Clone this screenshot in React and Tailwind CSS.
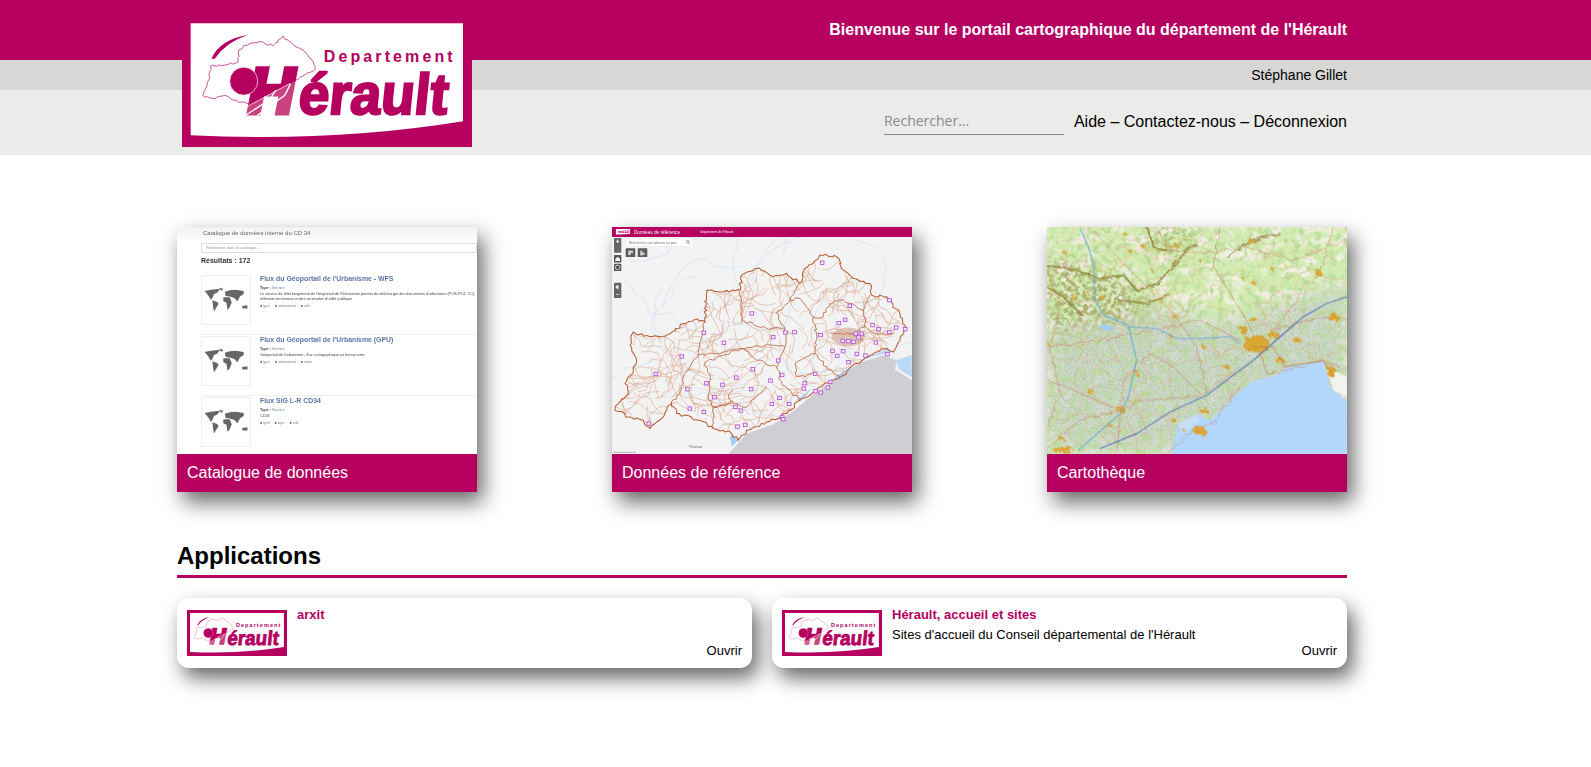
// App.jsx
import React from 'react';

const MAGENTA = '#b50060';

// small seeded generator so the drawn maps stay the same on every load
const makeRandom = (seed) => {
  let s = seed;
  return () => {
    s = (s * 16807) % 2147483647;
    return (s - 1) / 2147483646;
  };
};

const toPoints = (list) => list.map((p) => p.join(',')).join(' ');

const wander = (random, x, y, steps, step) => {
  const pts = [[x, y]];
  let angle = random() * Math.PI * 2;
  for (let i = 0; i < steps; i++) {
    angle += (random() - 0.5) * 1.6;
    x += Math.cos(angle) * step * (0.6 + random());
    y += Math.sin(angle) * step * (0.6 + random());
    pts.push([Math.round(x), Math.round(y)]);
  }
  return toPoints(pts);
};

// breaks each segment up so hand placed outlines look like real borders
const roughen = (points, seed, amp, closed) => {
  const random = makeRandom(seed);
  const list = points.trim().split(/\s+/).map((p) => p.split(',').map(Number));
  if (closed) list.push(list[0]);
  const out = [];
  list.forEach((p, i) => {
    if (i === 0) {
      out.push(p);
      return;
    }
    const q = list[i - 1];
    const n = Math.max(2, Math.round(Math.hypot(p[0] - q[0], p[1] - q[1]) / 9));
    for (let k = 1; k <= n; k++) {
      const t = k / n;
      const j = k === n ? 0 : amp;
      out.push([
        Math.round(q[0] + (p[0] - q[0]) * t + (random() - 0.5) * j),
        Math.round(q[1] + (p[1] - q[1]) * t + (random() - 0.5) * j),
      ]);
    }
  });
  return toPoints(out);
};

const LOGO_OUTLINE = roughen(
  '238,312 200,300 165,285 130,295 100,285 118,240 122,198 165,195 205,185 207,150 240,130 270,125 310,137 340,108 360,125 400,150 430,185 436,208 375,240',
  77,
  7,
);

const Logo = ({ className, idPrefix, ...rest }) => (
  <svg viewBox="37 45 869 395" preserveAspectRatio="none" className={className} {...rest}>
    <rect x="37" y="45" width="869" height="395" fill={MAGENTA} />
    <path d="M63 70H879V363Q500 425 63 405Z" fill="#fff" />
    <path d="M125 176Q150 118 235 105Q170 125 135 176Z" fill={MAGENTA} />
    <polyline points={LOGO_OUTLINE} fill="none" stroke={MAGENTA} strokeWidth="2" />
    <clipPath id={`${idPrefix}-top`}>
      <path d="M200 170H420V236L360 250L230 322H200Z" />
    </clipPath>
    <clipPath id={`${idPrefix}-low`}>
      <path d="M200 322H230L360 250L420 236V350H200Z" />
    </clipPath>
    <g style={{ fontFamily: '"Liberation Sans", Arial, sans-serif', fontWeight: 700 }}>
      <g clipPath={`url(#${idPrefix}-top)`}>
        <text
          transform="translate(225 338) skewX(-11)"
          fontSize="193"
          fill={MAGENTA}
          stroke={MAGENTA}
          strokeWidth="15"
        >
          H
        </text>
      </g>
      <g clipPath={`url(#${idPrefix}-low)`}>
        <text transform="translate(225 338) skewX(-11)" fontSize="193" fill="#c9417f" stroke="#c9417f" strokeWidth="15">
          H
        </text>
      </g>
      <text
        transform="translate(382 342) skewX(-6)"
        fontSize="172"
        fill={MAGENTA}
        stroke={MAGENTA}
        strokeWidth="7"
        textLength="448"
        lengthAdjust="spacingAndGlyphs"
      >
        érault
      </text>
      <text x="462" y="187" fontSize="48" fill={MAGENTA} textLength="386">
        Departement
      </text>
    </g>
    <path d="M228 345L300 298L318 270M262 346L345 285L362 252" stroke="#fff" strokeWidth="4" fill="none" />
    <path d="M230 320L360 250" stroke="#fff" strokeWidth="2" fill="none" />
    <circle cx="222" cy="243" r="42" fill={MAGENTA} stroke="#fff" strokeWidth="2" />
  </svg>
);

const WorldIcon = () => (
  <svg viewBox="20 50 147 82" className="w-[46px] h-[26px]" fill="#666">
    <path d="M25 62L45 58L75 55L65 68L55 72L50 85L45 90L38 78L30 68Z" />
    <path d="M72 52L85 55L78 62Z" />
    <path d="M50 92L65 97L70 103L60 120L55 128L52 110Z" />
    <path d="M90 65L105 60L125 58L150 62L150 72L138 80L130 95L120 85L105 80L92 78Z" />
    <path d="M85 82L105 82L112 98L105 115L98 122L95 100L85 95Z" />
    <path d="M145 110L162 108L162 118L146 118Z" />
  </svg>
);

const tag = (label) => (
  <span key={label} className="mr-[5px]">
    <span className="text-[#333]">●</span> <span className="text-[#6a7f9f]">{label}</span>
  </span>
);

const CatalogRow = ({ title, text, tags, last }) => (
  <div className={`flex h-[61px] pt-[1px] ${last ? '' : 'border-b border-[#f0f0f0]'}`}>
    <div className="w-[50px] h-[50px] shrink-0 border border-[#eee] rounded-[1px] flex items-center justify-center">
      <WorldIcon />
    </div>
    <div className="ml-[9px] w-[240px] whitespace-nowrap overflow-hidden">
      <div className="text-[6.9px] font-bold text-[#5d76a6] leading-[9px] -mt-[1px]">{title}</div>
      <div className="text-[3.8px] leading-[6px] mt-[2px] text-[#444]">
        <b>Type :</b> <span className="text-[#6a7f9f]">Service</span>
      </div>
      <div className="text-[3.8px] leading-[5px] mt-[1px] text-[#444] whitespace-normal">{text}</div>
      <div className="text-[3.8px] leading-[5px] mt-[2px]">{tags.map(tag)}</div>
    </div>
  </div>
);

const CatalogImage = () => (
  <div className="h-full bg-white blur-[0.35px] overflow-hidden">
    <div className="h-[12px] bg-gradient-to-b from-[#f2f2f2] to-[#fafafa] pl-[26px] text-[6px] leading-[12px] text-[#666] whitespace-nowrap">
      Catalogue de données interne du CD 34
    </div>
    <div className="pl-[24px]">
      <div className="mt-[4px] h-[10px] border border-[#ddd] rounded-[1px] pl-[4px] text-[3.8px] leading-[8px] text-[#999]">
        Rechercher dans le catalogue...
      </div>
      <div className="text-[7px] font-bold text-[#333] leading-[9px] mt-[3px] mb-[9px]">Résultats : 172</div>
      <CatalogRow
        title="Flux du Géoportail de l'Urbanisme - WFS"
        text="Le service de téléchargement du Géoportail de l'Urbanisme permet de télécharger des documents d'urbanisme (POS,PLU, CC), référents territoriaux et des servitudes d'utilité publique"
        tags={['gpu', 'urbanisme', 'wfs']}
      />
      <CatalogRow
        title="Flux du Géoportail de l'Urbanisme (GPU)"
        text="Géoportail de l'urbanisme - flux cartographique au format wms"
        tags={['gpu', 'urbanisme', 'wms']}
      />
      <CatalogRow title="Flux SIG L-R CD34" text="CD34" tags={['gml', 'wpc', 'wfs']} last />
    </div>
  </div>
);

const DEPT = roughen(
  '45,570 60,545 85,520 75,490 100,450 110,420 90,375 100,335 150,350 200,345 250,310 280,300 315,305 320,210 370,215 420,210 425,165 480,145 520,170 560,160 600,190 610,155 660,105 710,110 730,150 760,175 810,190 815,225 860,230 900,280 920,325 900,360 880,395 860,385 810,405 770,430 720,470 650,510 600,540 560,580 500,605 440,630 415,660 395,640 370,630 340,625 300,600 230,580 215,545 190,590 150,625 130,600 90,590',
  31,
  9,
  true,
);

const CANTONS = [
  '315,305 305,350 295,405 350,400 420,385 460,380 510,375 555,380',
  '420,210 425,300 500,325 555,325 530,280 570,240 600,235 640,290 670,290 690,250 730,240 790,270 810,225',
  '600,190 570,240',
  '555,325 555,380 530,440 545,490 570,510 600,540',
  '315,425 330,470 325,530 340,560 340,625',
  '315,425 370,405 430,385 470,420 530,440',
  '640,290 650,350 645,400 680,440 720,470',
  '645,400 585,430 590,470 650,460',
  '690,340 760,340 795,320 790,270',
  '795,320 830,340 880,340',
  '400,510 385,530 400,545 340,560 400,550 440,560 470,530 500,500',
  '215,545 240,520 250,470 295,405',
].map((line, i) => roughen(line, 100 + i, 8));

const MARKERS = [
  [666, 128], [455, 280], [519, 351], [556, 337], [583, 336], [661, 345], [311, 338], [371, 368], [245, 409],
  [167, 461], [262, 507], [319, 489], [367, 494], [343, 531], [269, 565], [311, 575], [146, 610], [408, 472],
  [458, 447], [534, 421], [511, 481], [546, 464], [453, 507], [538, 533], [515, 551], [567, 551], [546, 590],
  [549, 597], [406, 560], [422, 571], [435, 614], [412, 619], [614, 489], [611, 505], [646, 513], [662, 517],
  [683, 502], [690, 485], [645, 461], [745, 426], [711, 407], [697, 392], [729, 393], [770, 401], [796, 406],
  [862, 402], [827, 367], [867, 336], [888, 322], [915, 327], [835, 327], [817, 315], [868, 240], [749, 257],
  [735, 299], [716, 309], [767, 340], [785, 340], [775, 352], [728, 362], [745, 363], [760, 365],
];

const ReferenceMap = () => {
  const random = makeRandom(4711);
  const communes = Array.from({ length: 380 }, () =>
    wander(random, 50 + random() * 870, 110 + random() * 520, 5, 17),
  );
  const rivers = Array.from({ length: 26 }, () => wander(random, 40 + random() * 880, 60 + random() * 600, 9, 30));
  return (
    <svg viewBox="36 21 900 680" preserveAspectRatio="none" className="w-full h-full block blur-[0.3px]">
      <rect x="36" y="21" width="900" height="680" fill="#f3f3f3" />
      {rivers.map((r, i) => (
        <polyline key={i} points={r} fill="none" stroke="#c9def5" strokeWidth="1.8" />
      ))}
      <polygon
        points="385,701 440,640 520,612 580,572 640,522 720,468 780,428 850,405 890,420 885,448 936,480 936,701"
        fill="#cfced2"
      />
      <path d="M395 640L415 660L395 680L390 650Z M590 540L640 500L610 535Z M700 475L750 440L725 480Z" fill="#a9cdf2" />
      <path d="M775 425L860 385L880 395L815 410Z M885 420L935 405L936 470L900 450Z" fill="#bcd8f5" />
      <clipPath id="dept-clip">
        <polygon points={DEPT} />
      </clipPath>
      <g clipPath="url(#dept-clip)">
        {communes.map((c, i) => (
          <polyline key={i} points={c} fill="none" stroke="#d9a68c" strokeWidth="1.7" />
        ))}
        <ellipse cx="745" cy="350" rx="50" ry="28" fill="#b5532a" opacity="0.3" />
      </g>
      {CANTONS.map((c, i) => (
        <polyline key={i} points={c} fill="none" stroke="#bd6a43" strokeWidth="2.6" />
      ))}
      <polygon points={DEPT} fill="none" stroke="#b9572c" strokeWidth="3" />
      {MARKERS.map(([x, y], i) => (
        <rect key={i} x={x - 5} y={y - 5} width="11" height="10" fill="#f4ecfa" stroke="#b44fd6" strokeWidth="2.5" />
      ))}

      <rect x="36" y="21" width="900" height="30" fill={MAGENTA} />
      <Logo idPrefix="logo-mini" x="46" y="26" width="46" height="19" />
      <g style={{ fontFamily: '"Liberation Sans", Arial, sans-serif' }}>
        <text x="102" y="41" fontSize="14" fill="#fff">Données de référence</text>
        <text x="300" y="38" fontSize="9" fill="#fff">Département de l'Hérault</text>
        <rect x="78" y="55" width="200" height="24" rx="2" fill="#fff" stroke="#ddd" />
        <text x="86" y="71" fontSize="10" fill="#777">Rechercher une adresse ou pois</text>
        <circle cx="263" cy="65" r="4" fill="none" stroke="#444" strokeWidth="1.5" />
        <path d="M266 68L271 73" stroke="#444" strokeWidth="1.5" />
        <text x="268" y="684" fontSize="10" fill="#666">Pézenas</text>
      </g>
      <rect x="42" y="54" width="22" height="44" rx="2" fill="#666" />
      <path d="M48 64H58M53 59V69" stroke="#fff" strokeWidth="2.5" />
      <rect x="77" y="85" width="29" height="26" rx="2" fill="#5d5d5d" />
      <rect x="113" y="85" width="29" height="26" rx="2" fill="#5d5d5d" />
      <path d="M85 92H99V98H92V105H85Z M121 92H127V98H134V104H127V106H121Z" fill="#ddd" />
      <rect x="42" y="105" width="22" height="22" rx="2" fill="#555" />
      <path d="M46 117L53 110L60 117V123H46Z" fill="#fff" />
      <rect x="42" y="131" width="22" height="22" rx="2" fill="#555" />
      <circle cx="53" cy="142" r="7" fill="none" stroke="#fff" strokeWidth="2" />
      <rect x="42" y="188" width="22" height="46" rx="2" fill="#666" />
      <path d="M47 201L54 195V207Z M48 223H58" stroke="#fff" strokeWidth="2" fill="#fff" />
      <path d="M42 692V696H106V692" fill="none" stroke="#777" strokeWidth="1.5" />
    </svg>
  );
};

const ROUTES_RED = [
  '21,380 120,370 240,350 340,330 480,300 600,360',
  '21,480 100,510 240,570 300,540 480,530 600,440',
  '540,21 520,140 570,220 620,300 650,370',
  '880,21 840,160 770,240 700,330',
  '660,400 680,460 740,450 850,425 900,440',
  '150,21 260,140 340,220 400,280 470,380 500,520',
  '21,690 70,640 120,600 240,570',
  '380,700 470,620 520,610 600,500',
  '700,330 800,300 880,290 921,300',
  '350,21 380,90 500,100 610,80 760,120 921,60',
  '21,150 60,260 30,380 60,520 21,620',
  '240,580 230,700',
  '240,570 260,460 330,400 400,440 480,520',
];

const BLOBS = [
  [650, 372, 40, 26], [612, 330, 10, 14], [700, 345, 18, 10], [480, 632, 20, 11], [245, 568, 10, 9],
  [70, 688, 30, 12], [880, 292, 18, 10], [872, 452, 14, 16], [492, 570, 12, 10], [770, 360, 12, 7],
  [640, 300, 12, 6], [400, 600, 10, 6], [150, 508, 7, 4], [560, 440, 10, 5], [720, 420, 14, 8],
  [835, 160, 12, 6], [640, 185, 10, 6], [290, 460, 6, 6], [400, 285, 8, 5], [210, 615, 9, 5],
];

const RIDGES = [
  '321,21 341,81 381,91',
  '21,136 111,151 181,176 251,166 291,211 351,191 441,91 471,71',
  '21,200 70,230 130,290',
  '230,240 320,250 390,225',
  '560,110 640,60 720,40',
];

const TopoMap = () => {
  const random = makeRandom(2024);
  const minor = Array.from({ length: 300 }, () => wander(random, 21 + random() * 900, 21 + random() * 680, 4, 20));
  const towns = Array.from({ length: 50 }, () => [
    Math.round(21 + random() * 900),
    Math.round(21 + random() * 680),
    Math.round(2 + random() * 5),
  ]);
  const sea = '392,701 415,612 465,582 510,600 590,522 640,482 720,462 738,440 850,420 870,500 921,542 921,701';
  return (
    <svg viewBox="21 21 900 680" preserveAspectRatio="none" className="w-full h-full block blur-[0.35px]">
      <defs>
        <filter id="topo-green" x="0" y="0" width="100%" height="100%">
          <feTurbulence type="fractalNoise" baseFrequency="0.018 0.024" numOctaves="5" seed="8" />
          <feColorMatrix values="0 0 0 0 0.66  0 0 0 0 0.84  0 0 0 0 0.45  6 0 0 0 -2.1" />
        </filter>
        <filter id="topo-green-deep" x="0" y="0" width="100%" height="100%">
          <feTurbulence type="fractalNoise" baseFrequency="0.045" numOctaves="4" seed="14" />
          <feColorMatrix values="0 0 0 0 0.52  0 0 0 0 0.74  0 0 0 0 0.34  5 0 0 0 -2.5" />
        </filter>
        <filter id="topo-fine" x="0" y="0" width="100%" height="100%">
          <feTurbulence type="fractalNoise" baseFrequency="0.22" numOctaves="3" seed="3" />
          <feColorMatrix values="0 0 0 0 0.46  0 0 0 0 0.54  0 0 0 0 0.52  3 0 0 0 -1.35" />
        </filter>
        <filter id="topo-relief" x="0" y="0" width="100%" height="100%">
          <feTurbulence type="fractalNoise" baseFrequency="0.07" numOctaves="4" seed="21" />
          <feColorMatrix values="0 0 0 0 0.4  0 0 0 0 0.44  0 0 0 0 0.16  5 0 0 0 -2.15" />
        </filter>
        <filter id="wobble" x="-5%" y="-5%" width="110%" height="110%">
          <feTurbulence type="fractalNoise" baseFrequency="0.05" numOctaves="3" seed="5" />
          <feDisplacementMap in="SourceGraphic" scale="16" />
        </filter>
        <filter id="wobble-big" x="-5%" y="-5%" width="110%" height="110%">
          <feTurbulence type="fractalNoise" baseFrequency="0.07" numOctaves="3" seed="9" />
          <feDisplacementMap in="SourceGraphic" scale="30" />
        </filter>
        <filter id="soft-edge" x="-30%" y="-30%" width="160%" height="160%">
          <feGaussianBlur stdDeviation="30" />
        </filter>
        <mask id="relief-mask">
          <path d="M21 100L200 150L330 230L300 300L21 340Z M320 21L500 21L400 120L320 70Z" fill="#fff" filter="url(#soft-edge)" />
        </mask>
        <mask id="grey-mask">
          <path d="M21 330L330 270L560 310L921 190V500L400 701H21Z" fill="#fff" filter="url(#soft-edge)" />
        </mask>
      </defs>
      <rect x="21" y="21" width="900" height="680" fill="#f0f0e2" />
      <rect x="21" y="21" width="900" height="680" filter="url(#topo-green)" />
      <rect x="21" y="21" width="900" height="680" filter="url(#topo-green-deep)" />
      <g mask="url(#grey-mask)">
        <rect x="21" y="21" width="900" height="680" fill="#c9d4c4" opacity="0.7" />
        <rect x="21" y="21" width="900" height="680" filter="url(#topo-green-deep)" />
        <rect x="21" y="21" width="900" height="680" filter="url(#topo-fine)" />
      </g>
      <g mask="url(#relief-mask)">
        <rect x="21" y="21" width="900" height="680" filter="url(#topo-relief)" />
      </g>
      <g filter="url(#wobble)">
        {RIDGES.map((r, i) => (
          <polyline key={i} points={r} fill="none" stroke="#8f8238" strokeWidth="6" opacity="0.8" />
        ))}
      </g>
      {minor.map((m, i) => (
        <polyline key={i} points={m} fill="none" stroke={i % 3 ? '#d99590' : '#dfa848'} strokeWidth="1.3" opacity="0.7" />
      ))}
      <polygon points={sea} fill="#b3d7fa" />
      <path d="M860 440L921 470V530L880 510Z" fill="#f1f3ee" />
      <path d="M415 612L465 582L480 600L430 640Z" fill="#c8def6" />
      <g filter="url(#wobble)">
        {ROUTES_RED.map((r, i) => (
          <polyline key={i} points={r} fill="none" stroke="#c9705a" strokeWidth="1.8" opacity="0.85" />
        ))}
      </g>
      <g filter="url(#wobble-big)" fill="#d9a534">
        {BLOBS.map(([cx, cy, rx, ry], i) => (
          <ellipse key={i} cx={cx} cy={cy} rx={rx} ry={ry} />
        ))}
        {towns
          .filter(([x, y]) => y < 700 - (x - 392) * 0.9 || x < 392)
          .map(([x, y, r], i) => (
            <circle key={i} cx={x} cy={y} r={r} />
          ))}
      </g>
      <polyline
        points="120,25 145,80 160,130 165,240 190,285 265,315 290,420 265,530 240,580 115,690"
        fill="none"
        stroke="#5ea6d8"
        strokeWidth="3"
      />
      <polyline points="265,320 350,325 410,355 480,355 570,350 600,370" fill="none" stroke="#5ea6d8" strokeWidth="2.5" />
      <path d="M175 320Q200 305 225 325Q200 340 175 320Z" fill="#a9cdf0" />
      <polyline
        points="921,230 860,250 790,290 720,350 640,420 500,525 390,575 290,640 180,685"
        fill="none"
        stroke="#4a6db5"
        strokeWidth="3"
      />
      <polyline points="640,380 700,380 735,440 850,420 880,470" fill="none" stroke="#c9803f" strokeWidth="2.5" />
    </svg>
  );
};

const Tile = ({ label, children }) => (
  <a className="w-[300px] h-[265px] flex flex-col shadow-[6px_10px_20px_rgba(0,0,0,0.6)]">
    <div className="h-[227px] overflow-hidden">{children}</div>
    <div className="h-[38px] bg-[#b50060] text-white text-base leading-[38px] pl-[10px]">{label}</div>
  </a>
);

const AppCard = ({ title, text }) => (
  <div className="h-[70px] bg-white rounded-[12px] shadow-[6px_10px_20px_rgba(0,0,0,0.6)] flex pl-[10px] pr-[10px] pt-[12px]">
    <Logo idPrefix={`logo-${title.length}`} className="w-[100px] h-[46px] shrink-0" />
    <div className="ml-[10px] flex-1 flex flex-col">
      <div className="text-[13px] font-bold text-[#b50060] leading-[16px] -mt-[3px]">{title}</div>
      <div className="text-[13px] leading-[16px] mt-[4px] h-[16px] text-black">{text}</div>
      <div className="text-[13px] leading-[16px] text-right text-black">Ouvrir</div>
    </div>
  </div>
);

export default function App() {
  return (
    <div className="min-h-[767px] bg-white font-['Liberation_Sans',Arial,sans-serif] text-black">
      <header className="relative">
        <div className="h-[60px] bg-[#b50060] flex justify-end pr-[244px] pt-[20px]">
          <h1 className="text-base font-bold text-white leading-[20px]">
            Bienvenue sur le portail cartographique du département de l'Hérault
          </h1>
        </div>
        <div className="h-[30px] bg-[#d8d7d6] flex justify-end items-center pr-[244px] text-sm">Stéphane Gillet</div>
        <div className="h-[65px] bg-[#ebebea] flex justify-end pr-[244px] pt-[20px]">
          <input
            placeholder="Rechercher..."
            className="w-[180px] h-[25px] pb-[4px] bg-transparent border-b border-[#888] font-['Open_Sans',sans-serif] text-sm outline-none placeholder:text-[#8a8a8a]"
          />
          <nav className="ml-[10px] text-base leading-[22px] mt-[1px] whitespace-nowrap">
            Aide – Contactez-nous – Déconnexion
          </nav>
        </div>
        <Logo idPrefix="logo-main" className="absolute left-[182px] top-[15px] w-[290px] h-[132px]" />
      </header>

      <main className="ml-[177px] w-[1170px] pt-[72px]">
        <section className="flex justify-between">
          <Tile label="Catalogue de données">
            <CatalogImage />
          </Tile>
          <Tile label="Données de référence">
            <ReferenceMap />
          </Tile>
          <Tile label="Cartothèque">
            <TopoMap />
          </Tile>
        </section>

        <h2 className="mt-[49px] text-2xl font-bold leading-[30px] pb-[4px] border-b-[3px] border-[#b50060]">
          Applications
        </h2>

        <section className="grid grid-cols-2 gap-[20px] mt-[20px]">
          <AppCard title="arxit" text="" />
          <AppCard title="Hérault, accueil et sites" text="Sites d'accueil du Conseil départemental de l'Hérault" />
        </section>
      </main>
    </div>
  );
}
